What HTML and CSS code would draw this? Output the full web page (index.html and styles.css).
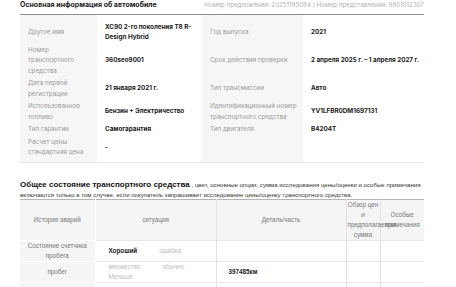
FILE: index.html
```html
<!DOCTYPE html>
<html lang="ru">
<head>
<meta charset="utf-8">
<link rel="stylesheet" href="styles.css">
</head>
<body>
<div class="page">
  <div class="sec-head">
    <h2 class="sec-title">Основная информация об автомобиле</h2>
    <span class="nums">Номер предложения: 20251195084 / Номер представления: 9801012307</span>
  </div>
  <table class="info">
    <colgroup>
      <col class="c-l1"><col class="c-v1"><col class="c-l2"><col class="c-v2">
    </colgroup>
    <tr>
      <td class="lb">Другое имя</td>
      <td class="vl">XC90 2-го поколения T8 R-Design Hybrid</td>
      <td class="lb">Год выпуска</td>
      <td class="vl">2021</td>
    </tr>
    <tr>
      <td class="lb">Номер транспортного средства</td>
      <td class="vl">360seo9001</td>
      <td class="lb">Срок действия проверки</td>
      <td class="vl nw">2 апреля 2025 г. – 1 апреля 2027 г.</td>
    </tr>
    <tr>
      <td class="lb">Дата первой регистрации</td>
      <td class="vl">21 января 2021 г.</td>
      <td class="lb">Тип трансмиссии</td>
      <td class="vl">Авто</td>
    </tr>
    <tr>
      <td class="lb">Использованное топливо</td>
      <td class="vl">Бензин + Электричество</td>
      <td class="lb">Идентификационный номер транспортного средства</td>
      <td class="vl">YV1LFBR0DM1697131</td>
    </tr>
    <tr>
      <td class="lb">Тип гарантии</td>
      <td class="vl">Самогарантия</td>
      <td class="lb">Тип двигателя</td>
      <td class="vl">B4204T</td>
    </tr>
    <tr>
      <td class="lb">Расчет цены стандартная цена</td>
      <td class="vl">-</td>
      <td class="lb"></td>
      <td class="vl"></td>
    </tr>
  </table>

  <p class="cond-head"><b class="cond-title">Общее состояние транспортного средства</b> , цвет, основные опции, сумма исследования цены/оценки и особые примечания включаются только в том случае, если покупатель запрашивает исследование цены/оценку транспортного средства.</p>

  <table class="cond">
    <colgroup>
      <col class="k1"><col class="k2"><col class="k3"><col class="k4"><col class="k5">
    </colgroup>
    <tr>
      <th class="first">История аварий</th>
      <th>ситуация</th>
      <th>Деталь/часть</th>
      <th class="narrow">Обзор цен и предполагаемая сумма</th>
      <th class="last">Особые примечания</th>
    </tr>
    <tr>
      <td class="first">Состояние счетчика пробега</td>
      <td class="sit"><span class="opt on">Хороший</span><span class="opt">ошибка</span></td>
      <td class="part"></td>
      <td></td>
      <td class="last"></td>
    </tr>
    <tr>
      <td class="first">пробег</td>
      <td class="sit"><span class="opt">множество<br>Меньше</span><span class="opt">обычно</span></td>
      <td class="part"><b>397485км</b></td>
      <td></td>
      <td class="last"></td>
    </tr>
    <tr>
      <td class="first">Обозначение</td>
      <td class="sit"></td>
      <td class="part"></td>
      <td></td>
      <td class="last"></td>
    </tr>
  </table>
</div>
</body>
</html>
```

FILE: styles.css
```css
html, body {
  margin: 0;
  padding: 0;
  background: #fff;
}

body {
  font-family: Inter, "Noto Sans", sans-serif;
}

.page {
  width: 404px;
  margin-left: 20px;
}

.sec-head {
  display: flex;
  justify-content: space-between;
  align-items: flex-start;
  height: 14px;
  padding-top: 0;
  border-bottom: 1px solid #8f8f8f;
}

.sec-title {
  margin: 0;
  font-size: 7px;
  line-height: 10px;
  font-weight: 700;
  color: #222;
}

.nums {
  font-size: 6.2px;
  line-height: 10px;
  color: #b0b0b0;
}

.info {
  width: 100%;
  border-collapse: collapse;
  table-layout: fixed;
  border-bottom: 1px solid #e4e4e4;
}

.c-l1 { width: 77px; }
.c-v1 { width: 105px; }
.c-l2 { width: 101px; }
.c-v2 { width: 121px; }

.info td {
  padding: 1.2px 3px 1.2px 8px;
  font-size: 6.3px;
  line-height: 10.3px;
  vertical-align: middle;
}

.info tr:first-child td { padding-top: 7px; }
.info tr:last-child td { padding-bottom: 5px; }

.info .lb {
  background: #f6f6f6;
  color: #9a9a9a;
}

.info .vl {
  color: #222;
  font-weight: 700;
}

.info .nw { white-space: nowrap; }

.cond-head {
  margin: 17px 0 0;
  font-family: "Liberation Sans", Arial, sans-serif;
  font-size: 6.1px;
  line-height: 9.5px;
  color: #333;
}

.cond-title {
  font-size: 8px;
  color: #111;
}

.cond {
  width: 100%;
  border-collapse: collapse;
  table-layout: fixed;
  border-top: 1px solid #b5b5b5;
  font-family: "Liberation Sans", Arial, sans-serif;
  font-size: 6.3px;
  line-height: 10px;
  color: #777;
}

.k1 { width: 75px; }
.k2 { width: 121px; }
.k3 { width: 130px; }
.k4 { width: 34px; }
.k5 { width: 44px; }

.cond th {
  height: 39px;
  padding: 0 1px;
  background: #f5f5f5;
  font-weight: 400;
  color: #777;
  text-align: center;
  vertical-align: middle;
  border-right: 1px solid #e2e2e2;
  border-bottom: 1px solid #e8e8e8;
}

.cond td {
  padding: 0 1px;
  vertical-align: middle;
  border-right: 1px solid #e2e2e2;
  border-bottom: 1px solid #e8e8e8;
  height: 19px;
}

.cond .first {
  background: #f5f5f5;
  text-align: center;
  color: #777;
  border-right-color: #fff;
  border-bottom-color: #fff;
}

.cond .last { border-right: 0; }

.cond td.sit {
  padding-left: 13px;
}

.opt {
  display: inline-block;
  vertical-align: top;
  margin-right: 22px;
  color: #bdbdbd;
}

.opt.on {
  color: #222;
  font-weight: 700;
}

.cond td.part {
  padding-left: 12px;
  color: #222;
}
```
